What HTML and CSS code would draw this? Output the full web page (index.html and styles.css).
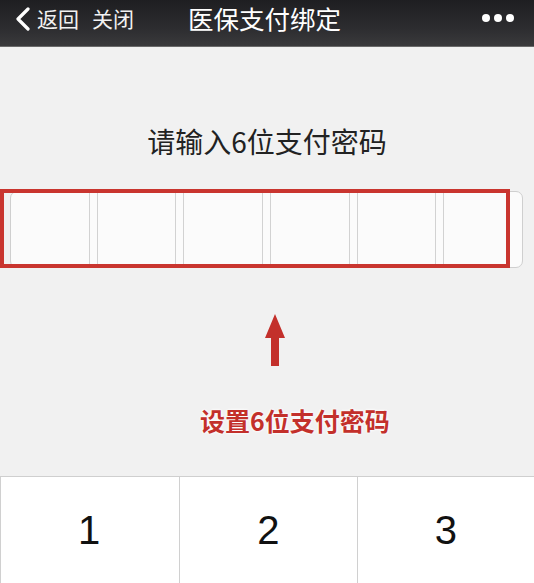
FILE: index.html
```html
<!DOCTYPE html>
<html lang="zh-CN">
<head>
<meta charset="utf-8">
<title>医保支付绑定</title>
<link rel="stylesheet" href="styles.css">
</head>
<body>
<div class="page">
  <header class="nav">
    <div class="nav-left">
      <svg class="chev" width="16" height="24" viewBox="0 0 16 24"><polyline points="13,2 3,12 13,22" fill="none" stroke="#fff" stroke-width="3.2" stroke-linecap="round" stroke-linejoin="round"/></svg>
      <span class="nav-link">返回</span>
      <span class="nav-link close">关闭</span>
    </div>
    <div class="nav-title">医保支付绑定</div>
    <div class="nav-more"><i></i><i></i><i></i></div>
  </header>

  <main class="content">
    <h1 class="prompt">请输入6位支付密码</h1>
    <div class="pwd-wrap">
      <div class="pwd-box">
        <div class="cell"></div><div class="sep"></div>
        <div class="cell"></div><div class="sep"></div>
        <div class="cell"></div><div class="sep"></div>
        <div class="cell"></div><div class="sep"></div>
        <div class="cell"></div><div class="sep"></div>
        <div class="cell"></div>
      </div>
      <div class="highlight"></div>
    </div>
    <div class="arrow-row">
      <svg width="22" height="52" viewBox="0 0 22 52"><polygon points="11,0 21,24 15,24 15,52 7,52 7,24 1,24" fill="#c3302b"/></svg>
    </div>
    <div class="note">设置6位支付密码</div>
  </main>

  <section class="keypad">
    <div class="key">1</div>
    <div class="key">2</div>
    <div class="key">3</div>
  </section>
</div>
</body>
</html>
```

FILE: styles.css
```css
html, body {
  margin: 0;
  padding: 0;
}
body {
  width: 534px;
  height: 583px;
  overflow: hidden;
  background: #f1f1f1;
  font-family: "Noto Sans CJK SC", "Noto Sans", sans-serif;
}
.page {
  display: flex;
  flex-direction: column;
  height: 583px;
}
.nav {
  height: 47px;
  box-sizing: border-box;
  background: linear-gradient(#1e1e21, #2c2c2f 60%, #3a3a3c);
  display: flex;
  align-items: flex-start;
  padding: 5px 0 0 15px;
  color: #fff;
  position: relative;
  border-bottom: 1px solid #6a6a6a;
}
.nav-left {
  display: flex;
  align-items: center;
  height: 26px;
}
.chev {
  margin-top: 1px;
}
.nav-link {
  font-size: 21px;
  line-height: 26px;
  margin-left: 6px;
  color: #f2f2f2;
}
.nav-link.close {
  margin-left: 13px;
}
.nav-title {
  font-size: 25.5px;
  line-height: 26px;
  margin-left: 54px;
  color: #fff;
}
.nav-more {
  margin-left: auto;
  margin-right: 20px;
  display: flex;
  gap: 4px;
  height: 26px;
  align-items: center;
}
.nav-more i {
  width: 8px;
  height: 8px;
  border-radius: 50%;
  background: #fff;
  display: block;
}
.content {
  flex: 1;
  display: flex;
  flex-direction: column;
}
.prompt {
  margin: 75px 0 0 0;
  text-align: center;
  font-size: 28px;
  line-height: 38px;
  font-weight: 400;
  color: #222;
}
.pwd-wrap {
  position: relative;
  margin-top: 29px;
  height: 80px;
}
.pwd-box {
  position: absolute;
  left: 10px;
  top: 2px;
  width: 513px;
  height: 77px;
  box-sizing: border-box;
  border: 1px solid #cfcfcf;
  border-radius: 7px;
  background: #fbfbfb;
  display: flex;
}
.cell {
  flex: 1;
}
.sep {
  width: 7px;
  border-left: 1px solid #d2d2d2;
  border-right: 1px solid #d2d2d2;
}
.highlight {
  position: absolute;
  left: 0;
  top: 0;
  width: 510px;
  height: 79px;
  box-sizing: border-box;
  border: 4px solid #c9352f;
}
.arrow-row {
  display: flex;
  justify-content: center;
  margin-top: 45px;
  padding-left: 16px;
}
.note {
  margin-top: 38px;
  text-align: center;
  font-size: 25px;
  line-height: 32px;
  font-weight: 700;
  color: #c3302b;
  padding-left: 56px;
  text-shadow: 0 0 3px #fff, 0 0 3px #fff;
}
.keypad {
  height: 106px;
  background: #fff;
  border-top: 1px solid #cfcfcf;
  display: flex;
}
.key {
  flex: 1;
  display: flex;
  justify-content: center;
  padding-top: 30px;
  font-family: "Liberation Sans", Arial, sans-serif;
  font-size: 40px;
  line-height: 46px;
  color: #111;
  border-left: 1px solid #d0d0d0;
}
.key:first-child {
  padding-right: 2px;
}
```
